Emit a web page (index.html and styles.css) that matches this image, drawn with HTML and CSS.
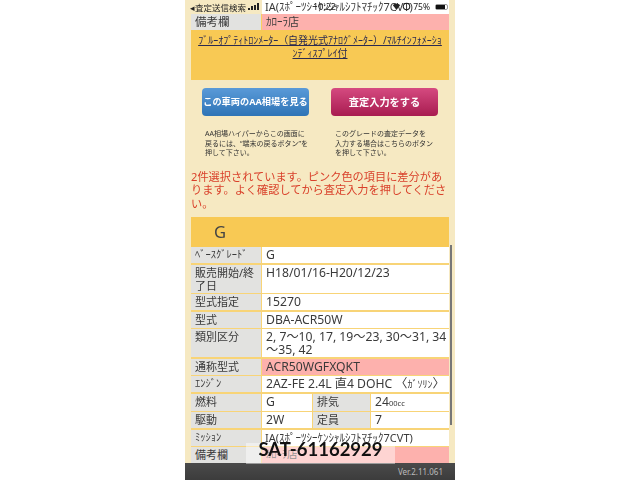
FILE: index.html
```html
<!DOCTYPE html>
<html lang="ja">
<head>
<meta charset="utf-8">
<title>査定入力</title>
<link rel="stylesheet" href="styles.css">
</head>
<body>
<div class="phone">
  <div class="content">
    <div class="top-strip">
      <div class="strip-label"></div>
      <div class="strip-value">IA(ｽﾎﾟｰﾂｼｰｹﾝｼｬﾙｼﾌﾄﾏﾁｯｸ7CVT)</div>
    </div>
    <div class="note-row">
      <div class="note-label">備考欄</div>
      <div class="note-value">ｶﾛｰﾗ店</div>
    </div>
    <div class="option-panel">
      <a class="option-link">ﾌﾞﾙｰｵﾌﾟﾃｨﾄﾛﾝﾒｰﾀｰ（自発光式ｱﾅﾛｸﾞﾒｰﾀｰ）/ﾏﾙﾁｲﾝﾌｫﾒｰｼｮﾝﾃﾞｨｽﾌﾟﾚｲ付</a>
    </div>
    <div class="actions">
      <div class="action">
        <div class="btn btn-blue">この車両のAA相場を見る</div>
        <p class="hint">AA相場ハイパーからこの画面に<br>戻るには、“端末の戻るボタン”を<br>押して下さい。</p>
      </div>
      <div class="action">
        <div class="btn btn-pink">査定入力をする</div>
        <p class="hint hint-right">このグレードの査定データを<br>入力する場合はこちらのボタン<br>を押して下さい。</p>
      </div>
    </div>
    <p class="warning">2件選択されています。ピンク色の項目に差分があります。よく確認してから査定入力を押してください。</p>
    <div class="grade-panel">
      <div class="grade-title">G</div>
      <div class="spec">
        <div class="k small">ﾍﾞｰｽｸﾞﾚｰﾄﾞ</div><div class="v wide">G</div>
        <div class="k">販売開始/終了日</div><div class="v wide">H18/01/16-H20/12/23</div>
        <div class="k">型式指定</div><div class="v wide">15270</div>
        <div class="k">型式</div><div class="v wide">DBA-ACR50W</div>
        <div class="k">類別区分</div><div class="v wide">2, 7～10, 17, 19～23, 30～31, 34～35, 42</div>
        <div class="k">通称型式</div><div class="v wide diff">ACR50WGFXQKT</div>
        <div class="k small">ｴﾝｼﾞﾝ</div><div class="v wide">2AZ-FE 2.4L 直4 DOHC 〈<span class="kana">ｶﾞｿﾘﾝ</span>〉</div>
        <div class="k">燃料</div><div class="v">G</div><div class="k">排気</div><div class="v">24<span class="unit">00cc</span></div>
        <div class="k">駆動</div><div class="v">2W</div><div class="k">定員</div><div class="v">7</div>
        <div class="k small">ﾐｯｼｮﾝ</div><div class="v wide mission">IA(ｽﾎﾟｰﾂｼｰｹﾝｼｬﾙｼﾌﾄﾏﾁｯｸ7CVT)</div>
        <div class="k">備考欄</div><div class="v wide diff kana">ｶﾛｰﾗ店</div>
      </div>
    </div>
  </div>
  <div class="status">
    <span class="st-left">◂査定送信検索</span>
    <span class="signal"><i></i><i></i><i></i><i></i></span>
    <span class="st-time">10:22</span>
    <span class="st-right">
      <svg class="st-icon" viewBox="0 0 10 10" width="9" height="9"><path d="M1 3.500 5 9 9 3.500C7 1.500 3 1.500 1 3.500Z" fill="#222"/></svg>
      <svg class="st-icon" viewBox="0 0 10 10" width="9" height="9"><circle cx="5" cy="5" r="3.600" fill="none" stroke="#222" stroke-width="1.200"/></svg>
      <span class="pct">75%</span>
      <span class="battery"><b></b></span>
    </span>
  </div>
  <div class="scrollbar"></div>
  <footer class="footer">Ver.2.11.061</footer>
  <div class="stamp">SAT-61162929</div>
</div>
</body>
</html>
```
FILE: styles.css
```css
* { box-sizing: border-box; }
html, body { margin: 0; height: 100%; background: #fff; }
body { font-family: "Noto Sans", "Noto Sans CJK JP", sans-serif; color: #3a3a3a; overflow: hidden; }
.phone { position: relative; width: 270px; height: 480px; margin: 0 auto; background: #f6e9c2; overflow: hidden; }
.content { padding: 0 6px; filter: blur(0.4px); }
.top-strip { display: grid; grid-template-columns: 71px 1fr; height: 14px; background: #f6e9c2; }
.strip-value { background: #fff; font-size: 11px; line-height: 14px; padding-left: 3px; white-space: nowrap; overflow: hidden; }
.note-row { display: grid; grid-template-columns: 70px 1fr; column-gap: 1px; height: 16px; background: #f9cf5f; }
.note-label { background: #e2e2e0; font-size: 11.500px; line-height: 16px; padding-left: 4px; }
.note-value { background: #fdb1ad; font-size: 11px; line-height: 16px; padding-left: 4px; }
.option-panel { height: 50px; background: #f8c954; padding: 4px 5px 0; text-align: center; font-size: 10px; line-height: 13px; }
.option-link { text-decoration: underline; color: #2b2a50; }
.actions { display: grid; grid-template-columns: 107px 107px; column-gap: 22px; padding: 8px 5px 0 11px; }
.btn { height: 28px; border-radius: 4px; color: #fff; font-weight: 700; text-align: center; white-space: nowrap; line-height: 28px; }
.btn-blue { background: linear-gradient(#5a9ad8, #2e74b6); font-size: 9.200px; }
.btn-pink { background: linear-gradient(#d54a80, #a81c50); font-size: 10.200px; }
.hint { margin: 13px 0 0 3px; font-size: 7px; line-height: 9.500px; color: #333; white-space: nowrap; }
.hint-right { margin-left: 4px; }
.warning { margin: 12px 0 0; font-size: 11.200px; line-height: 13.500px; color: #d9402a; }
.grade-panel { margin-top: 7px; background: #f8c954; }
.grade-title { height: 30px; padding-left: 23px; font-size: 16.500px; line-height: 30px; color: #444; }
.spec { display: grid; grid-template-columns: 70px 50px 57px 1fr; gap: 1.500px 1px; background: #f8d477; }
.k { background: #e2e2e0; font-size: 11px; line-height: 13px; padding: 1px 4px; min-height: 16px; }
.k.small { font-size: 10.500px; }
.v { background: #fff; font-size: 12.200px; line-height: 13px; padding: 1px 0 1px 4px; min-height: 16px; }
.v.wide { grid-column: span 3; }
.diff { background: #fdb1ad; }
.kana { font-size: 10px; }
.v.kana { font-size: 10.500px; }
.unit { font-size: 7.500px; }
.mission { font-size: 11px; white-space: nowrap; overflow: hidden; padding-left: 3px; }
.status { position: absolute; top: 0; left: 5px; right: 5px; height: 13px; display: flex; align-items: center; font-size: 8px; color: #222; }
.st-left { white-space: nowrap; font-size: 8.500px; }
.signal { display: flex; align-items: flex-end; gap: 1px; height: 7px; margin-left: 2px; }
.signal i { width: 2px; background: #222; }
.signal i:nth-child(1) { height: 2px; }
.signal i:nth-child(2) { height: 4px; }
.signal i:nth-child(3) { height: 5px; }
.signal i:nth-child(4) { height: 7px; }
.st-time { position: absolute; left: 123px; font-size: 9px; }
.st-right { position: absolute; right: 2px; display: flex; align-items: center; gap: 1px; }
.st-icon { display: block; }
.pct { margin-left: 1px; font-size: 8.500px; }
.battery { display: block; width: 13px; height: 6px; margin-left: 4px; border: 1px solid #999; border-radius: 2px; }
.battery b { display: block; width: 9px; height: 100%; background: #111; }
.scrollbar { position: absolute; left: 265px; top: 245px; width: 2px; height: 180px; background: #777; }
.footer { position: absolute; left: 0; right: 0; bottom: 0; height: 17px; background: linear-gradient(#4a4a4a, #3c3c3c); color: #bbb; font-size: 8px; line-height: 17px; text-align: right; padding-right: 12px; }
.stamp { position: absolute; left: 61px; top: 443px; width: 149px; height: 21px; background: rgba(255,255,255,.45); color: #111; font-family: Lato, sans-serif; font-weight: 700; font-size: 18.500px; line-height: 12px; text-align: center; }
```
